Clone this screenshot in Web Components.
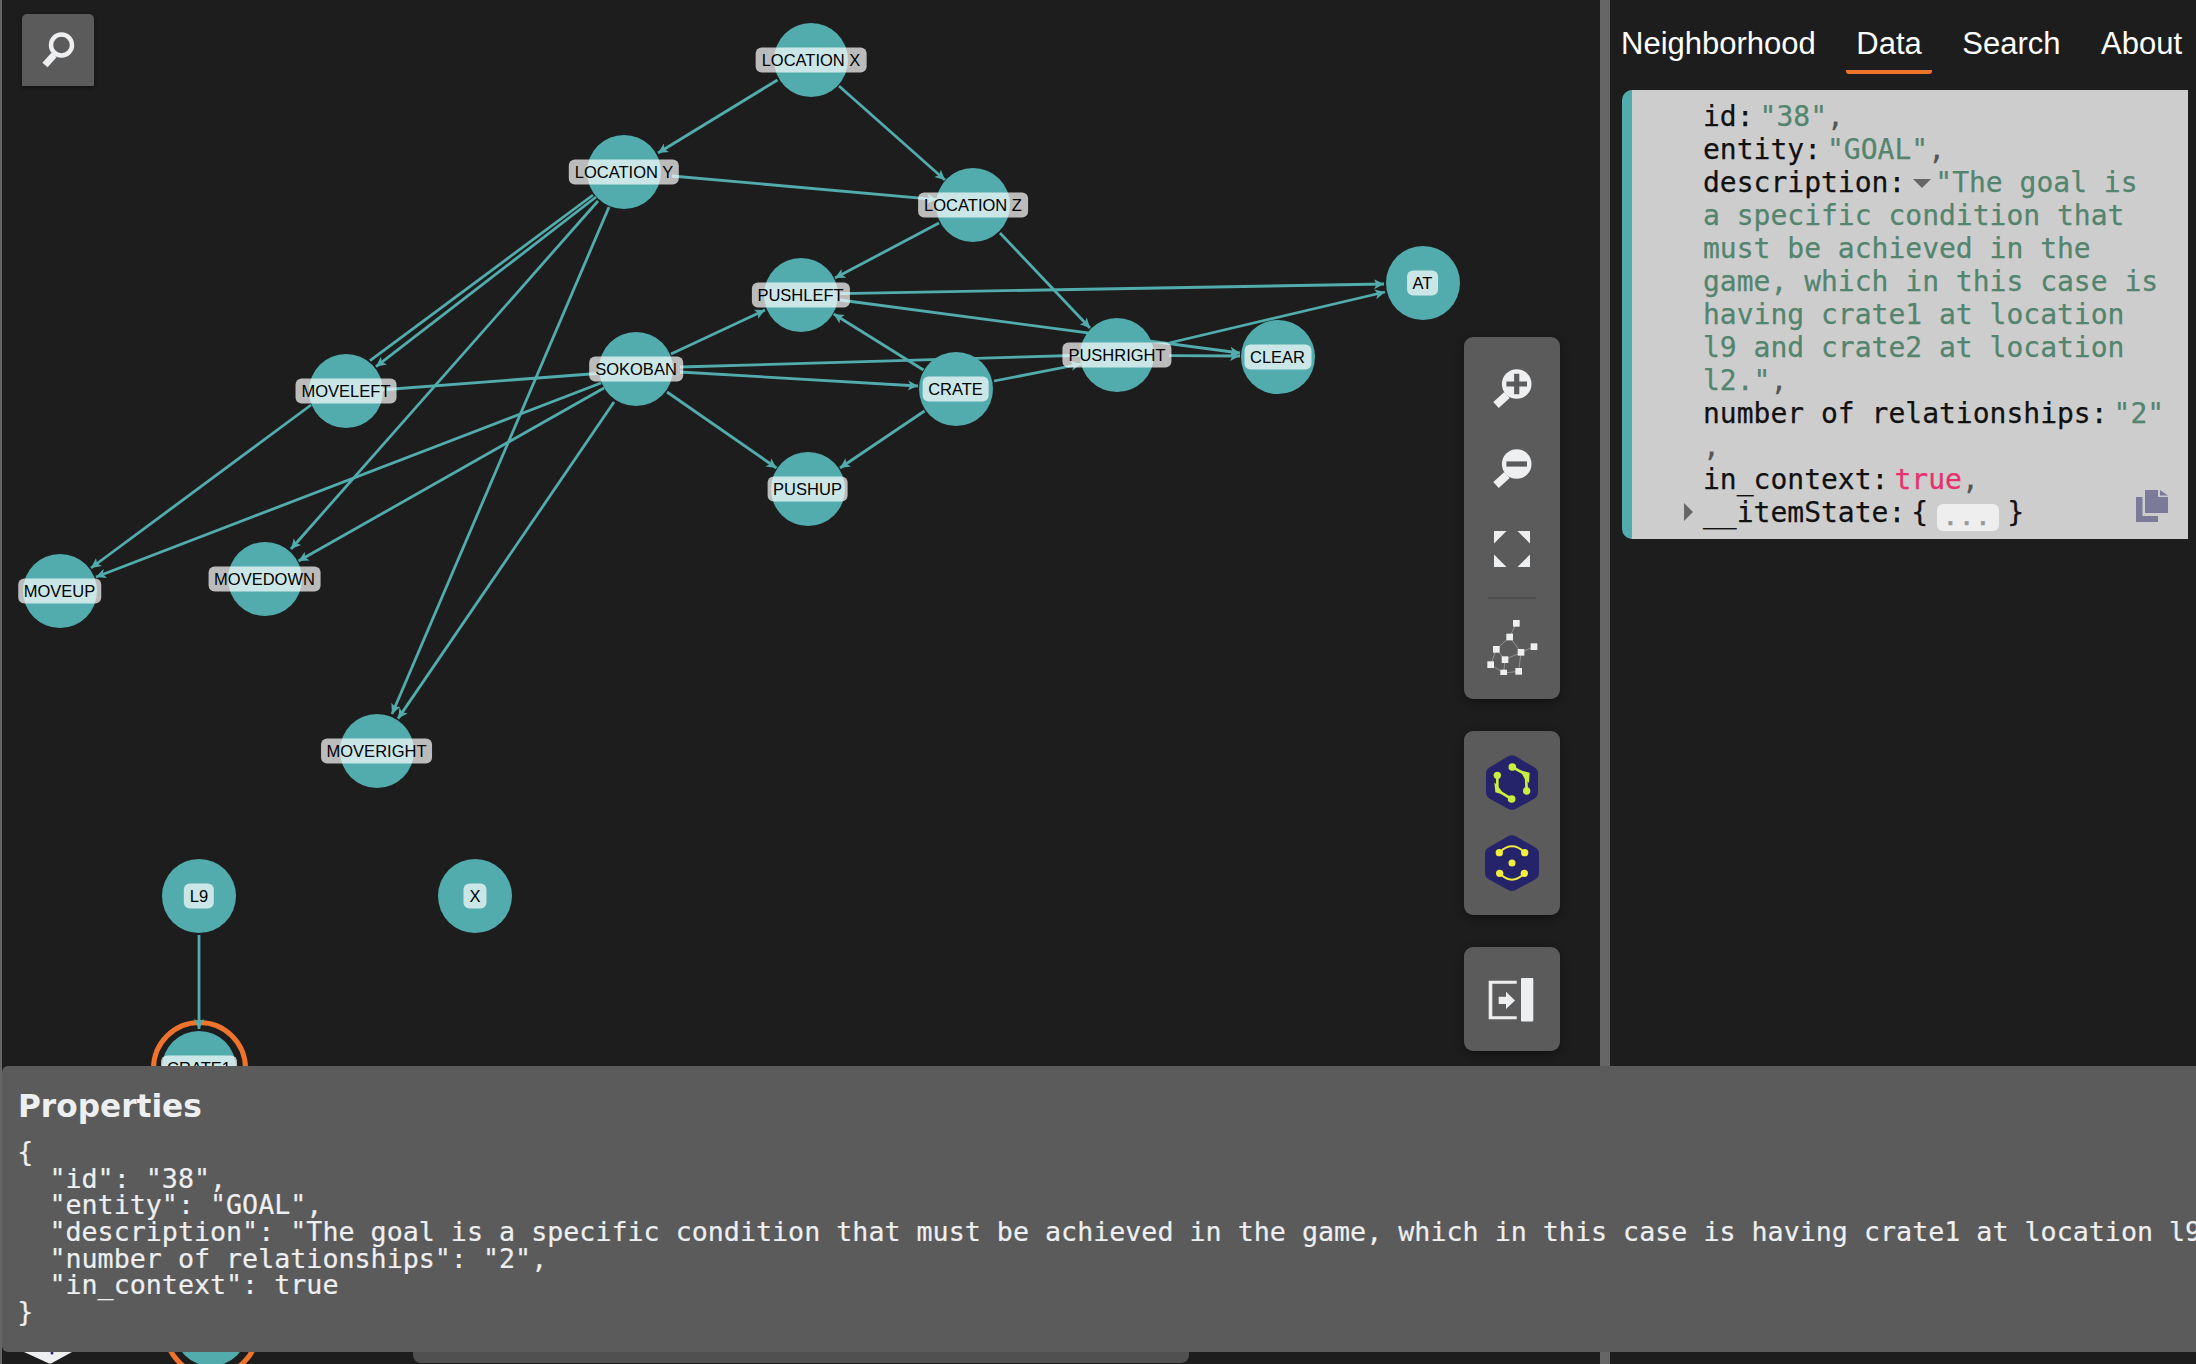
<!DOCTYPE html>
<html lang="en">
<head>
<meta charset="utf-8">
<title>Graph viewer</title>
<style>
    html, body { margin: 0; height: 100%; background: #1d1d1d; }
    body { position: relative; width: 2196px; height: 1364px; overflow: hidden; font-family: "Liberation Sans", Arial, sans-serif; }
</style>
</head>
<body>
<app-shell>
    <graph-view>
        <edge-layer></edge-layer>
        <graph-node x="811" y="60">LOCATION X</graph-node>
        <graph-node x="624" y="172">LOCATION Y</graph-node>
        <graph-node x="973" y="205">LOCATION Z</graph-node>
        <graph-node x="800.5" y="295">PUSHLEFT</graph-node>
        <graph-node x="636" y="369">SOKOBAN</graph-node>
        <graph-node x="346" y="391">MOVELEFT</graph-node>
        <graph-node x="955.5" y="388.5">CRATE</graph-node>
        <graph-node x="1117" y="355">PUSHRIGHT</graph-node>
        <graph-node x="1277.5" y="357">CLEAR</graph-node>
        <graph-node x="1422.5" y="283">AT</graph-node>
        <graph-node x="807.5" y="489">PUSHUP</graph-node>
        <graph-node x="59.5" y="591">MOVEUP</graph-node>
        <graph-node x="264.5" y="579">MOVEDOWN</graph-node>
        <graph-node x="376.5" y="751">MOVERIGHT</graph-node>
        <graph-node x="199" y="896">L9</graph-node>
        <graph-node x="475" y="896">X</graph-node>
        <graph-node x="199" y="1068" selected>CRATE1</graph-node>
        <graph-node x="211" y="1329" selected></graph-node>
        <edge-layer over></edge-layer>

        <search-button></search-button>

        <control-stack>
            <control-panel class="view">
                <icon-button>
                    <svg width="40" height="40" viewBox="0 0 40 40">
                        <path d="M4 36 L15 26" stroke="#eeeff1" stroke-width="8" fill="none"/>
                        <circle cx="24.7" cy="15" r="14.8" fill="#eeeff1"/>
                        <path d="M14.4 12.4h7.7v-7.7h5.2v7.7h7.7v5.2h-7.7v7.7h-5.2v-7.7h-7.7z" fill="#5b5b5b"/>
                    </svg>
                </icon-button>
                <icon-button>
                    <svg width="40" height="40" viewBox="0 0 40 40">
                        <path d="M4 36 L15 26" stroke="#eeeff1" stroke-width="8" fill="none"/>
                        <circle cx="24.7" cy="15" r="14.8" fill="#eeeff1"/>
                        <rect x="14.4" y="12.4" width="20.6" height="5.2" fill="#5b5b5b"/>
                    </svg>
                </icon-button>
                <icon-button>
                    <svg width="36" height="36" viewBox="0 0 36 36" fill="#eeeff1">
                        <path d="M0 0h12.5L0 12.5z"/>
                        <path d="M36 0v12.5L23.5 0z"/>
                        <path d="M0 36V23.5L12.5 36z"/>
                        <path d="M36 36H23.5L36 23.5z"/>
                    </svg>
                </icon-button>
                <panel-separator></panel-separator>
                <icon-button tall>
                    <svg width="52" height="56" viewBox="198 893 156 168">
                        <g stroke="#9a9a9a" stroke-width="2.6" fill="none">
                            <path d="M289 906L269 947L229 984L212 1030L251 1055L296 1050L303 993L269 947"/>
                            <path d="M229 984L255 1015L303 993L342 976"/>
                            <path d="M255 1015L251 1055"/>
                        </g>
                        <g fill="#eeeff1">
                            <rect x="279" y="896" width="20" height="20"/>
                            <rect x="259" y="937" width="20" height="20"/>
                            <rect x="219" y="974" width="20" height="20"/>
                            <rect x="293" y="983" width="20" height="20"/>
                            <rect x="332" y="966" width="20" height="20"/>
                            <rect x="245" y="1005" width="20" height="20"/>
                            <rect x="202" y="1020" width="20" height="20"/>
                            <rect x="241" y="1045" width="20" height="20"/>
                            <rect x="286" y="1040" width="20" height="20"/>
                        </g>
                    </svg>
                </icon-button>
            </control-panel>
            <control-panel>
                <icon-button>
                    <svg width="60" height="60" viewBox="186 128 180 180">
                        <path d="M276 157L332 190V246L276 277L220 246V190Z" fill="#25246a" stroke="#25246a" stroke-width="44" stroke-linejoin="round"/>
                        <g fill="#c9ee3f">
                            <circle cx="277" cy="170" r="11.5"/><circle cx="320" cy="242" r="11"/>
                            <circle cx="232" cy="195" r="11"/><circle cx="275" cy="266" r="11.5"/>
                            <path d="M300 180L329 187L327 218L314 205Z"/>
                            <path d="M223 216L226 246L254 254L238 233Z"/>
                        </g>
                        <g fill="none" stroke="#c9ee3f" stroke-width="8">
                            <path d="M277 170L318 193L320 242"/>
                            <path d="M232 195L232 240L275 266"/>
                        </g>
                    </svg>
                </icon-button>
                <icon-button>
                    <svg width="60" height="60" viewBox="186 369 180 180">
                        <path d="M276 399L334 432V488L276 520L218 488V432Z" fill="#25246a" stroke="#25246a" stroke-width="46" stroke-linejoin="round"/>
                        <g fill="#f3ee3d">
                            <circle cx="238" cy="428" r="11"/><circle cx="314" cy="428" r="11"/>
                            <circle cx="276" cy="459" r="10.5"/>
                            <circle cx="239" cy="490" r="11"/><circle cx="313" cy="490" r="11"/>
                        </g>
                        <g fill="none" stroke="#f3ee3d" stroke-width="5.5">
                            <path d="M240 426Q276 392 312 426"/>
                            <path d="M241 492Q276 526 311 492"/>
                        </g>
                    </svg>
                </icon-button>
            </control-panel>
            <control-panel>
                <icon-button>
                    <svg width="48" height="48" viewBox="0 0 48 48" fill="#eeeff1">
                        <rect x="33" y="3" width="12.3" height="43.6" rx="1"/>
                        <path d="M28.7 5.7H.7V44.3H28.7V41.3H4.3V8.7H28.7Z"/>
                        <path d="M10.7 21.7H18V16.7L27 25.4L18 34V29H10.7Z"/>
                    </svg>
                </icon-button>
            </control-panel>
        </control-stack>

        <legend-tip></legend-tip>
        <bottom-bar></bottom-bar>
    </graph-view>

    <side-panel>
        <tab-bar>
            <tab-item>Neighborhood</tab-item>
            <tab-item active>Data</tab-item>
            <tab-item>Search</tab-item>
            <tab-item>About</tab-item>
        </tab-bar>
        <json-card></json-card>
    </side-panel>
</app-shell>

<properties-panel></properties-panel>

<script>
const FONT_MONO = '"DejaVu Sans Mono", "Liberation Mono", monospace';

class AppShell extends HTMLElement {
    connectedCallback() {
        this.attachShadow({ mode: 'open' });
        this.shadowRoot.innerHTML = `
            <style>
                :host { display: flex; width: 2196px; height: 1364px; }
            </style>
            <slot></slot>
        `;
    }
}

class GraphView extends HTMLElement {
    connectedCallback() {
        this.attachShadow({ mode: 'open' });
        this.shadowRoot.innerHTML = `
            <style>
                :host {
                    display: block;
                    position: relative;
                    flex: 0 0 1600px;
                    height: 1364px;
                    overflow: hidden;
                    background: #1d1d1d;
                    box-shadow: inset 2px 0 #666;
                }
            </style>
            <slot></slot>
        `;
    }
}

// edges are x1, y1, x2, y2, arrow; nodes sit on top and hide the middle of the ones that cross them
const EDGES = [
    [777.5, 80, 658, 153, 1],
    [839, 86, 945, 180, 1],
    [672, 176, 937, 199.6, 1],
    [939, 223, 835, 278, 1],
    [1000, 233, 1090, 328, 1],
    [671, 354, 765, 310, 1],
    [667, 392, 776.5, 468, 1],
    [680, 372, 918, 386, 1],
    [680, 367, 1090, 355, 0],
    [630, 371, 380, 390, 0],
    [601, 383, 96, 577, 1],
    [604, 388, 298.5, 561, 1],
    [614, 402, 398, 718.6, 1],
    [593, 195, 370, 360.7, 0],
    [596, 197, 376, 366.7, 1],
    [598, 201, 291, 549, 1],
    [609, 207, 392, 714, 1],
    [311, 405, 91, 568, 1],
    [840, 293.6, 1384, 284, 1],
    [840, 300, 1240, 353, 1],
    [1169, 355.7, 1240, 356, 1],
    [1169, 343, 1385, 292, 1],
    [923.5, 370, 833.7, 314, 1],
    [924.5, 411, 840, 468, 1],
    [994, 381, 1081, 364, 1],
    [199, 935, 199, 1029, 1]
];

class EdgeLayer extends HTMLElement {
    connectedCallback() {
        this.attachShadow({ mode: 'open' });
        // the last edge runs over the orange selection ring, so it gets a layer above the nodes
        const list = this.hasAttribute('over') ? EDGES.slice(-1) : EDGES.slice(0, -1);
        const lines = list.map(([x1, y1, x2, y2, arrow]) =>
            `<line x1="${x1}" y1="${y1}" x2="${x2}" y2="${y2}"${arrow ? ' marker-end="url(#arrow)"' : ''}/>`
        ).join('');
        this.shadowRoot.innerHTML = `
            <style>
                :host { display: block; position: absolute; left: 0; top: 0; width: 1600px; height: 1364px; }
                svg { display: block; }
                line { stroke: #52acad; stroke-width: 2.8; }
            </style>
            <svg width="1600" height="1364" viewBox="0 0 1600 1364">
                <defs>
                    <marker id="arrow" markerUnits="userSpaceOnUse" markerWidth="12" markerHeight="12" refX="10" refY="5" orient="auto">
                        <path d="M0 0L10 5L0 10L2.5 5z" fill="#52acad"/>
                    </marker>
                </defs>
                ${lines}
            </svg>
        `;
    }
}

class GraphNode extends HTMLElement {
    connectedCallback() {
        this.attachShadow({ mode: 'open' });
        this.style.left = this.getAttribute('x') + 'px';
        this.style.top = this.getAttribute('y') + 'px';
        const empty = !this.textContent.trim();
        this.shadowRoot.innerHTML = `
            <style>
                :host { display: block; position: absolute; width: 0; height: 0; }
                .disc {
                    position: absolute;
                    left: -37px; top: -37px;
                    width: 74px; height: 74px;
                    border-radius: 50%;
                    background: #52acad;
                }
                .ring {
                    position: absolute;
                    left: -48.5px; top: -48.5px;
                    width: 97px; height: 97px;
                    box-sizing: border-box;
                    border: 5.5px solid #ee742b;
                    border-radius: 50%;
                }
                .label {
                    position: absolute;
                    left: 0; top: 0;
                    transform: translate(-50%, -50%);
                    height: 25px;
                    padding: 0 6px;
                    border-radius: 6px;
                    background: rgba(255, 255, 255, 0.7);
                    color: #000;
                    font: 16.5px/25px "Liberation Sans", Arial, sans-serif;
                    white-space: nowrap;
                }
            </style>
            ${this.hasAttribute('selected') ? '<div class="ring"></div>' : ''}
            <div class="disc"></div>
            ${empty ? '' : '<div class="label"><slot></slot></div>'}
        `;
    }
}

class SearchButton extends HTMLElement {
    connectedCallback() {
        this.attachShadow({ mode: 'open' });
        this.shadowRoot.innerHTML = `
            <style>
                :host {
                    display: flex;
                    align-items: center;
                    justify-content: center;
                    position: absolute;
                    left: 22px; top: 14px;
                    width: 72px; height: 72px;
                    background: #5b5b5b;
                    border-radius: 5px 5px 1px 1px;
                    box-shadow: 0 2px 4px rgba(0, 0, 0, .4);
                }
            </style>
            <svg width="44" height="44" viewBox="0 0 44 44">
                <path d="M9 37L18 27" stroke="#eeeff1" stroke-width="7" fill="none"/>
                <circle cx="25.5" cy="17" r="10.5" fill="none" stroke="#eeeff1" stroke-width="4.4"/>
            </svg>
        `;
    }
}

class ControlStack extends HTMLElement {
    connectedCallback() {
        this.attachShadow({ mode: 'open' });
        this.shadowRoot.innerHTML = `
            <style>
                :host {
                    display: flex;
                    flex-direction: column;
                    gap: 32px;
                    position: absolute;
                    top: 337px; right: 40px;
                    width: 96px;
                }
            </style>
            <slot></slot>
        `;
    }
}

class ControlPanel extends HTMLElement {
    connectedCallback() {
        this.attachShadow({ mode: 'open' });
        this.shadowRoot.innerHTML = `
            <style>
                :host {
                    display: flex;
                    flex-direction: column;
                    padding: 12px 0;
                    background: #5b5b5b;
                    border-radius: 9px;
                    box-shadow: 0 3px 8px rgba(0, 0, 0, .35);
                }
                :host(.view) { padding-bottom: 4px; }
            </style>
            <slot></slot>
        `;
    }
}

class IconButton extends HTMLElement {
    connectedCallback() {
        this.attachShadow({ mode: 'open' });
        this.shadowRoot.innerHTML = `
            <style>
                :host { display: flex; align-items: center; justify-content: center; height: 80px; }
                :host([tall]) { height: 96px; }
            </style>
            <slot></slot>
        `;
    }
}

class PanelSeparator extends HTMLElement {
    connectedCallback() {
        this.attachShadow({ mode: 'open' });
        this.shadowRoot.innerHTML = `
            <style>
                :host { display: block; height: 2px; margin: 8px 24px 0; background: #4e4e4e; }
            </style>
        `;
    }
}

class LegendTip extends HTMLElement {
    connectedCallback() {
        this.attachShadow({ mode: 'open' });
        this.shadowRoot.innerHTML = `
            <style>
                :host { display: block; position: absolute; left: 20px; top: 1346px; width: 60px; height: 18px; }
            </style>
            <svg width="60" height="18" viewBox="0 0 60 18">
                <path d="M4 6L52 6L52 6L32 17Q30 18 28 17Z" fill="#eeeff1"/>
                <circle cx="32" cy="7" r="1.5" fill="#25246a"/>
            </svg>
        `;
    }
}

class BottomBar extends HTMLElement {
    connectedCallback() {
        this.attachShadow({ mode: 'open' });
        this.shadowRoot.innerHTML = `
            <style>
                :host {
                    display: block;
                    position: absolute;
                    left: 413px; top: 1330px;
                    width: 776px; height: 33px;
                    background: #505050;
                    border-radius: 0 0 8px 8px;
                }
            </style>
        `;
    }
}

class SidePanel extends HTMLElement {
    connectedCallback() {
        this.attachShadow({ mode: 'open' });
        this.shadowRoot.innerHTML = `
            <style>
                :host {
                    display: block;
                    flex: 1;
                    min-width: 0;
                    border-left: 10px solid #666;
                    background: #1d1d1d;
                }
            </style>
            <slot></slot>
        `;
    }
}

class TabBar extends HTMLElement {
    connectedCallback() {
        this.attachShadow({ mode: 'open' });
        this.shadowRoot.innerHTML = `
            <style>
                :host { display: flex; gap: 20.5px; height: 74px; margin-bottom: 16px; padding-left: 1px; }
            </style>
            <slot></slot>
        `;
    }
}

class TabItem extends HTMLElement {
    connectedCallback() {
        this.attachShadow({ mode: 'open' });
        this.shadowRoot.innerHTML = `
            <style>
                :host {
                    display: block;
                    box-sizing: border-box;
                    height: 74px;
                    padding: 27px 10px 0;
                    color: #fff;
                    font: 31px/34px "Liberation Sans", Arial, sans-serif;
                    white-space: nowrap;
                    border-bottom: 4px solid transparent;
                }
                :host([active]) { border-bottom-color: #ee742b; border-radius: 0 0 3px 3px; }
            </style>
            <slot></slot>
        `;
    }
}

class JsonCard extends HTMLElement {
    connectedCallback() {
        this.attachShadow({ mode: 'open' });
        this.shadowRoot.innerHTML = `
            <style>
                :host {
                    display: block;
                    position: relative;
                    box-sizing: border-box;
                    width: 566px;
                    height: 449px;
                    margin-left: 12px;
                    padding: 9.5px 18px 0 71px;
                    background: #cdcdcd;
                    border-left: 10px solid #52acad;
                    border-radius: 10px 0 0 10px;
                    color: #111;
                    font: 28px/33px ${FONT_MONO};
                    -webkit-text-stroke: 0.25px;
                }
                .row { position: relative; }
                .key { margin-right: 6px; }
                .str { color: #53846e; }
                .val { display: inline-block; }
                .bool { color: #e8306f; }
                .comma { color: #555; }
                .caret {
                    display: inline-block;
                    width: 0; height: 0;
                    margin: 0 4px 0 2px;
                    border-left: 9.5px solid transparent;
                    border-right: 9.5px solid transparent;
                    border-top: 9px solid #666;
                    vertical-align: 4px;
                }
                .closed {
                    position: absolute;
                    left: -19.5px; top: 7px;
                    width: 0; height: 0;
                    border-top: 9.5px solid transparent;
                    border-bottom: 9.5px solid transparent;
                    border-left: 9px solid #666;
                }
                .dots {
                    display: inline-block;
                    width: 62px; height: 27px;
                    margin: 0 8px 0 9px;
                    background: #eee;
                    border-radius: 6px;
                    color: #999;
                    font-size: 22px;
                    font-weight: bold;
                    line-height: 27px;
                    letter-spacing: 3px;
                    text-align: center;
                    vertical-align: -3px;
                }
                .copy { position: absolute; left: 504px; top: 400px; }
            </style>
            <div class="row"><span class="key">id:</span><span class="str">"38"</span><span class="comma">,</span></div>
            <div class="row"><span class="key">entity:</span><span class="str">"GOAL"</span><span class="comma">,</span></div>
            <div class="row"><span class="key">description:</span><span class="caret"></span><span class="str">"The goal is a specific condition that must be achieved in the game, which in this case is having crate1 at location l9 and crate2 at location l2."</span><span class="comma">,</span></div>
            <div class="row"><span class="key">number of relationships:</span><span class="str val">"2"</span><span class="comma val">,</span></div>
            <div class="row"><span class="key">in_context:</span><span class="bool">true</span><span class="comma">,</span></div>
            <div class="row"><span class="closed"></span><span class="key">__itemState:</span>{<span class="dots">...</span>}</div>
            <svg class="copy" width="33" height="32" viewBox="0 0 33 32" fill="#7b7b99">
                <path d="M9 0H22L22 7H32V23H9Z"/>
                <path d="M24 0L32 5.5H24Z"/>
                <path d="M0 7H6.5V26H22V32H0Z"/>
            </svg>
        `;
    }
}

class PropertiesPanel extends HTMLElement {
    connectedCallback() {
        this.attachShadow({ mode: 'open' });
        const props = {
            id: '38',
            entity: 'GOAL',
            description: 'The goal is a specific condition that must be achieved in the game, which in this case is having crate1 at location l9 and crate2 at location l2.',
            'number of relationships': '2',
            in_context: true
        };
        this.shadowRoot.innerHTML = `
            <style>
                :host {
                    display: block;
                    position: absolute;
                    left: 2px; right: 0; top: 1066px;
                    box-sizing: border-box;
                    height: 286px;
                    padding: 21px 16px 0;
                    overflow: hidden;
                    background: #5b5b5b;
                    border-radius: 6px 0 0 6px;
                    color: #eeeff1;
                }
                h3 {
                    margin: 0 0 14px;
                    font: bold 31.2px/38px "DejaVu Sans", sans-serif;
                }
                pre {
                    margin: 0 0 0 -0.7px;
                    font: 26.68px/26.67px ${FONT_MONO};
                    -webkit-text-stroke: 0.2px;
                }
            </style>
            <h3>Properties</h3>
            <pre></pre>
        `;
        this.shadowRoot.querySelector('pre').textContent = JSON.stringify(props, null, 2);
    }
}

customElements.define('app-shell', AppShell);
customElements.define('graph-view', GraphView);
customElements.define('edge-layer', EdgeLayer);
customElements.define('graph-node', GraphNode);
customElements.define('search-button', SearchButton);
customElements.define('control-stack', ControlStack);
customElements.define('control-panel', ControlPanel);
customElements.define('icon-button', IconButton);
customElements.define('panel-separator', PanelSeparator);
customElements.define('legend-tip', LegendTip);
customElements.define('bottom-bar', BottomBar);
customElements.define('side-panel', SidePanel);
customElements.define('tab-bar', TabBar);
customElements.define('tab-item', TabItem);
customElements.define('json-card', JsonCard);
customElements.define('properties-panel', PropertiesPanel);
</script>
</body>
</html>
